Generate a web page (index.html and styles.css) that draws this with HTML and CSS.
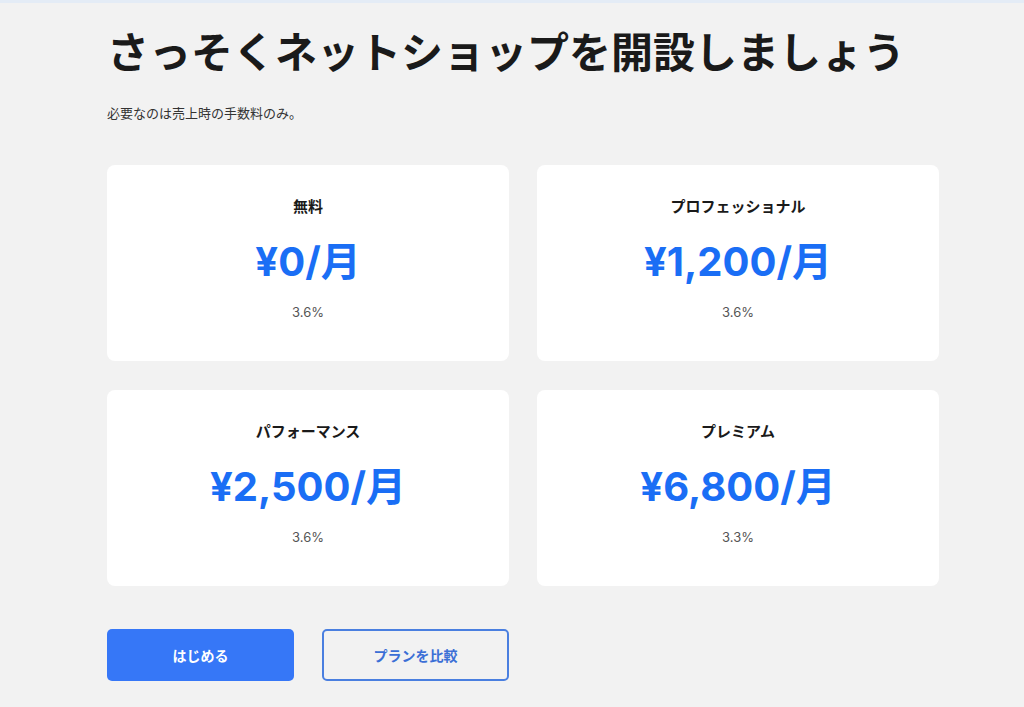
FILE: index.html
```html
<!DOCTYPE html>
<html lang="ja">
<head>
    <meta charset="UTF-8">
    <meta name="viewport" content="width=device-width, initial-scale=1.0">
    <title>料金プラン</title>
    <link rel="stylesheet" href="styles.css">
</head>
<body>

<div class="page">
    <h1 class="title">さっそくネットショップを開設しましょう</h1>
    <p class="lead">必要なのは売上時の手数料のみ。</p>

    <div class="plans">
        <div class="plan">
            <div class="plan-name">無料</div>
            <div class="plan-price">¥0/月</div>
            <div class="plan-fee">3.6%</div>
        </div>
        <div class="plan">
            <div class="plan-name">プロフェッショナル</div>
            <div class="plan-price">¥1,200/月</div>
            <div class="plan-fee">3.6%</div>
        </div>
        <div class="plan">
            <div class="plan-name">パフォーマンス</div>
            <div class="plan-price">¥2,500/月</div>
            <div class="plan-fee">3.6%</div>
        </div>
        <div class="plan">
            <div class="plan-name">プレミアム</div>
            <div class="plan-price">¥6,800/月</div>
            <div class="plan-fee">3.3%</div>
        </div>
    </div>

    <div class="actions">
        <button class="btn btn-primary">はじめる</button>
        <button class="btn btn-outline">プランを比較</button>
    </div>
</div>

</body>
</html>
```

FILE: styles.css
```css
body {
    margin: 0;
    background-color: #f2f2f2;
    border-top: 3px solid #e4ecf6;
    font-family: "Noto Sans CJK JP", "Noto Sans", sans-serif;
    color: #1a1a1a;
}

.page {
    width: 832px;
    margin-left: 107px;
    padding-top: 21px;
}

.title {
    margin: 0;
    font-size: 42px;
    font-weight: 700;
    line-height: 52px;
}

.lead {
    margin: 27px 0 0;
    font-size: 13px;
    line-height: 20px;
    color: #333;
}

.plans {
    display: grid;
    grid-template-columns: repeat(2, 1fr);
    column-gap: 28px;
    row-gap: 29px;
    margin-top: 42px;
}

.plan {
    height: 196px;
    background: #fff;
    border-radius: 8px;
    display: flex;
    flex-direction: column;
    align-items: center;
    padding-top: 29px;
    box-sizing: border-box;
}

.plan-name {
    font-size: 15px;
    font-weight: 700;
    line-height: 24px;
}

.plan-price {
    margin-top: 17px;
    font-family: Inter, "Noto Sans CJK JP", sans-serif;
    font-size: 40px;
    font-weight: 700;
    line-height: 54px;
    color: #1a6ef5;
}

.plan-fee {
    margin-top: 13px;
    font-family: Inter, "Noto Sans CJK JP", sans-serif;
    font-size: 13px;
    line-height: 20px;
    color: #555;
}

.actions {
    display: flex;
    gap: 28px;
    margin-top: 43px;
}

.btn {
    width: 187px;
    height: 52px;
    border-radius: 5px;
    font-family: inherit;
    font-size: 14px;
    font-weight: 700;
    cursor: pointer;
}

.btn-primary {
    background-color: #3677f7;
    border: none;
    color: #fff;
}

.btn-outline {
    background-color: transparent;
    border: 2px solid #4a7fe0;
    color: #3b6fd6;
}
```
